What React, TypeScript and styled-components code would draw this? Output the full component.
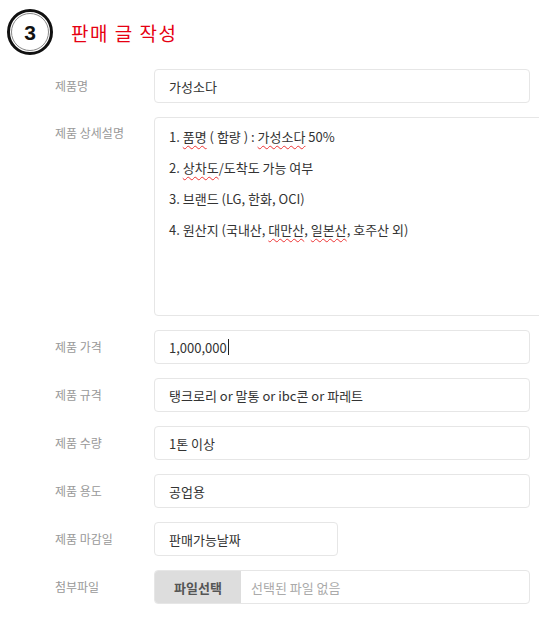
import styled, { createGlobalStyle } from "styled-components";

const Global = createGlobalStyle`
  body {
    margin: 0;
    background: #fff;
    font-family: "Noto Sans CJK KR", "Noto Sans", sans-serif;
  }
`;

const rows: { label: string; value: string; width?: number; caret?: boolean }[] = [
  { label: "제품 가격", value: "1,000,000", caret: true },
  { label: "제품 규격", value: "탱크로리 or 말통 or ibc콘 or 파레트" },
  { label: "제품 수량", value: "1톤 이상" },
  { label: "제품 용도", value: "공업용" },
  { label: "제품 마감일", value: "판매가능날짜", width: 184 },
];

const StepBadge = () => (
  <svg width="48" height="48" viewBox="0 0 48 48">
    <circle cx="24" cy="24" r="21.5" fill="#fff" stroke="#111" strokeWidth="3" />
    <circle cx="24" cy="24" r="18.5" fill="none" stroke="#888" strokeWidth="1" />
    <text
      x="24"
      y="31.5"
      textAnchor="middle"
      fontFamily="Liberation Sans, Arial, sans-serif"
      fontWeight="bold"
      fontSize="21"
      fill="#111"
    >
      3
    </text>
  </svg>
);

export default function App() {
  return (
    <S.Page>
      <Global />
      <S.Header>
        <StepBadge />
        <S.Title>판매 글 작성</S.Title>
      </S.Header>
      <S.Form>
        <S.Row>
          <S.Label>제품명</S.Label>
          <S.Field>가성소다</S.Field>
        </S.Row>
        <S.Row $top>
          <S.Label $top>제품 상세설명</S.Label>
          <S.TextArea>
            <p>
              1. <S.Typo>품명</S.Typo> ( 함량 ) : <S.Typo>가성소다</S.Typo> 50%
            </p>
            <p>
              2. <S.Typo>상차도</S.Typo>/도착도 가능 여부
            </p>
            <p>3. 브랜드 (LG, 한화, OCI)</p>
            <p>
              4. 원산지 (국내산, <S.Typo>대만산</S.Typo>, <S.Typo>일본산</S.Typo>, 호주산 외)
            </p>
          </S.TextArea>
        </S.Row>
        {rows.map((r) => (
          <S.Row key={r.label}>
            <S.Label>{r.label}</S.Label>
            <S.Field style={r.width ? { width: r.width } : undefined}>
              {r.value}
              {r.caret && <S.Caret />}
            </S.Field>
          </S.Row>
        ))}
        <S.Row>
          <S.Label>첨부파일</S.Label>
          <S.FileBox>
            <S.FileButton>파일선택</S.FileButton>
            <S.FileName>선택된 파일 없음</S.FileName>
          </S.FileBox>
        </S.Row>
      </S.Form>
    </S.Page>
  );
}

const S = {
  Page: styled.div`
    width: 539px;
    height: 624px;
    overflow: hidden;
  `,

  Header: styled.div`
    display: flex;
    align-items: center;
    gap: 17px;
    padding: 8px 0 0 6px;
    height: 48px;
  `,

  Title: styled.h2`
    margin: 0;
    font-size: 19px;
    font-weight: 400;
    color: #e60012;
    letter-spacing: 1.5px;
  `,

  Form: styled.div`
    display: flex;
    flex-direction: column;
    gap: 14px;
    padding: 13px 0 0 55px;
  `,

  Row: styled.div<{ $top?: boolean }>`
    display: flex;
    align-items: ${(p) => (p.$top ? "flex-start" : "center")};
  `,

  Label: styled.div<{ $top?: boolean }>`
    width: 99px;
    flex: none;
    font-size: 12px;
    line-height: 16px;
    color: #999;
    padding-top: ${(p) => (p.$top ? "8px" : "0")};
  `,

  Field: styled.div`
    box-sizing: border-box;
    width: 376px;
    height: 34px;
    display: flex;
    align-items: center;
    padding: 0 14px;
    border: 1px solid #e6e6e6;
    border-radius: 4px;
    font-size: 13px;
    color: #333;
  `,

  Caret: styled.span`
    display: inline-block;
    width: 1px;
    height: 16px;
    background: #222;
    margin-left: 1px;
  `,

  TextArea: styled.div`
    box-sizing: border-box;
    width: 400px;
    height: 199px;
    flex: none;
    padding: 9px 14px;
    border: 1px solid #e6e6e6;
    border-radius: 4px;
    font-size: 13px;
    color: #333;

    p {
      margin: 0 0 12px;
      line-height: 19px;
    }
  `,

  Typo: styled.span`
    text-decoration: underline wavy #e33;
    text-decoration-thickness: 1px;
    text-underline-offset: 3px;
  `,

  FileBox: styled.div`
    box-sizing: border-box;
    width: 376px;
    height: 34px;
    display: flex;
    align-items: stretch;
    border: 1px solid #e6e6e6;
    border-radius: 4px;
    overflow: hidden;
    font-size: 13px;
  `,

  FileButton: styled.div`
    width: 86px;
    display: flex;
    align-items: center;
    justify-content: center;
    background: #ddd;
    color: #555;
    font-weight: 700;
  `,

  FileName: styled.div`
    display: flex;
    align-items: center;
    padding-left: 10px;
    color: #aaa;
  `,
};
